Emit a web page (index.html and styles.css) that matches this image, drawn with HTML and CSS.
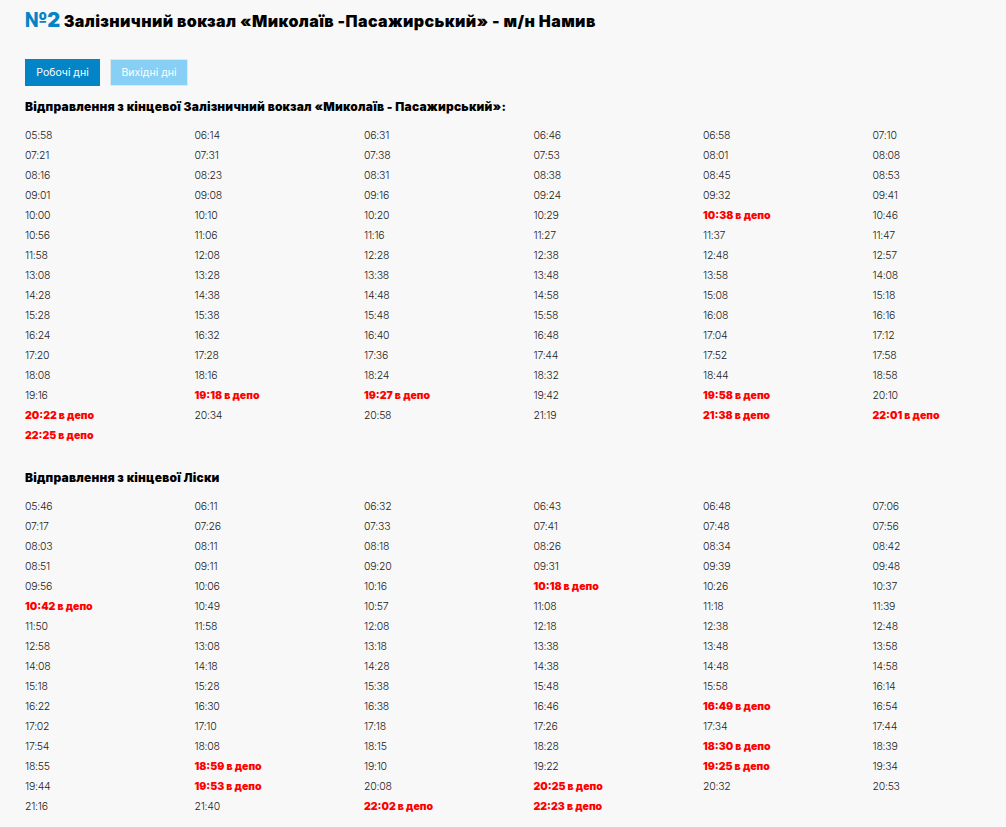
FILE: index.html
```html
<!DOCTYPE html>
<html lang="uk">
<head>
<meta charset="utf-8">
<title>Маршрут №2</title>
<link rel="stylesheet" href="styles.css">
</head>
<body>
<main class="page">
<h1 class="title"><span class="num">№2</span> Залізничний вокзал «Миколаїв -Пасажирський» - м/н Намив</h1>
<div class="tabs"><button class="tab active">Робочі дні</button><button class="tab">Вихідні дні</button></div>
<h2 class="head">Відправлення з кінцевої Залізничний вокзал «Миколаїв - Пасажирський»:</h2>
<div class="times">
<span>05:58</span><span>06:14</span><span>06:31</span><span>06:46</span><span>06:58</span><span>07:10</span>
<span>07:21</span><span>07:31</span><span>07:38</span><span>07:53</span><span>08:01</span><span>08:08</span>
<span>08:16</span><span>08:23</span><span>08:31</span><span>08:38</span><span>08:45</span><span>08:53</span>
<span>09:01</span><span>09:08</span><span>09:16</span><span>09:24</span><span>09:32</span><span>09:41</span>
<span>10:00</span><span>10:10</span><span>10:20</span><span>10:29</span><span class="depot">10:38 в депо</span><span>10:46</span>
<span>10:56</span><span>11:06</span><span>11:16</span><span>11:27</span><span>11:37</span><span>11:47</span>
<span>11:58</span><span>12:08</span><span>12:28</span><span>12:38</span><span>12:48</span><span>12:57</span>
<span>13:08</span><span>13:28</span><span>13:38</span><span>13:48</span><span>13:58</span><span>14:08</span>
<span>14:28</span><span>14:38</span><span>14:48</span><span>14:58</span><span>15:08</span><span>15:18</span>
<span>15:28</span><span>15:38</span><span>15:48</span><span>15:58</span><span>16:08</span><span>16:16</span>
<span>16:24</span><span>16:32</span><span>16:40</span><span>16:48</span><span>17:04</span><span>17:12</span>
<span>17:20</span><span>17:28</span><span>17:36</span><span>17:44</span><span>17:52</span><span>17:58</span>
<span>18:08</span><span>18:16</span><span>18:24</span><span>18:32</span><span>18:44</span><span>18:58</span>
<span>19:16</span><span class="depot">19:18 в депо</span><span class="depot">19:27 в депо</span><span>19:42</span><span class="depot">19:58 в депо</span><span>20:10</span>
<span class="depot">20:22 в депо</span><span>20:34</span><span>20:58</span><span>21:19</span><span class="depot">21:38 в депо</span><span class="depot">22:01 в депо</span>
<span class="depot">22:25 в депо</span>
</div>
<h2 class="head second">Відправлення з кінцевої Ліски</h2>
<div class="times">
<span>05:46</span><span>06:11</span><span>06:32</span><span>06:43</span><span>06:48</span><span>07:06</span>
<span>07:17</span><span>07:26</span><span>07:33</span><span>07:41</span><span>07:48</span><span>07:56</span>
<span>08:03</span><span>08:11</span><span>08:18</span><span>08:26</span><span>08:34</span><span>08:42</span>
<span>08:51</span><span>09:11</span><span>09:20</span><span>09:31</span><span>09:39</span><span>09:48</span>
<span>09:56</span><span>10:06</span><span>10:16</span><span class="depot">10:18 в депо</span><span>10:26</span><span>10:37</span>
<span class="depot">10:42 в депо</span><span>10:49</span><span>10:57</span><span>11:08</span><span>11:18</span><span>11:39</span>
<span>11:50</span><span>11:58</span><span>12:08</span><span>12:18</span><span>12:38</span><span>12:48</span>
<span>12:58</span><span>13:08</span><span>13:18</span><span>13:38</span><span>13:48</span><span>13:58</span>
<span>14:08</span><span>14:18</span><span>14:28</span><span>14:38</span><span>14:48</span><span>14:58</span>
<span>15:18</span><span>15:28</span><span>15:38</span><span>15:48</span><span>15:58</span><span>16:14</span>
<span>16:22</span><span>16:30</span><span>16:38</span><span>16:46</span><span class="depot">16:49 в депо</span><span>16:54</span>
<span>17:02</span><span>17:10</span><span>17:18</span><span>17:26</span><span>17:34</span><span>17:44</span>
<span>17:54</span><span>18:08</span><span>18:15</span><span>18:28</span><span class="depot">18:30 в депо</span><span>18:39</span>
<span>18:55</span><span class="depot">18:59 в депо</span><span>19:10</span><span>19:22</span><span class="depot">19:25 в депо</span><span>19:34</span>
<span>19:44</span><span class="depot">19:53 в депо</span><span>20:08</span><span class="depot">20:25 в депо</span><span>20:32</span><span>20:53</span>
<span>21:16</span><span>21:40</span><span class="depot">22:02 в депо</span><span class="depot">22:23 в депо</span>
</div>
</main>
</body>
</html>
```

FILE: styles.css
```css
html, body {
  margin: 0;
  height: 827px;
  overflow: hidden;
  background: #f8f8f8;
}
.page {
  padding: 9px 0 0 25px;
  font-family: Inter, "Liberation Sans", sans-serif;
  color: #222;
}
.title {
  margin: 0;
  font-size: 16px;
  line-height: 22px;
  font-weight: 900;
  letter-spacing: 0.38px;
  color: #000;
  white-space: nowrap;
}
.num {
  font-size: 20px;
  font-weight: 900;
  letter-spacing: 0;
  color: #0284c7;
}
.tabs {
  display: flex;
  gap: 10px;
  margin-top: 27px;
}
.tab {
  height: 27px;
  padding: 0;
  border: 0;
  font: 400 10.5px Inter, "Liberation Sans", sans-serif;
  color: #fff;
  background: #0284c7;
  width: 75px;
}
.tab:not(.active) {
  width: 78px;
  background: #87cff5;
  border: 1px solid #e3e7ea;
}
.head {
  margin: 13px 0 0;
  font-size: 12px;
  line-height: 16px;
  font-weight: 900;
  letter-spacing: 0.21px;
  color: #000;
  white-space: nowrap;
}
.second {
  margin-top: 24px;
}
.times {
  display: grid;
  grid-template-columns: repeat(6, 169.5px);
  grid-auto-rows: 20px;
  margin-top: 11px;
  font-size: 10.5px;
  font-weight: 300;
  letter-spacing: -0.25px;
  line-height: 20px;
  white-space: nowrap;
}
.depot {
  color: #f00;
  font-weight: 900;
  letter-spacing: 0;
}
```
